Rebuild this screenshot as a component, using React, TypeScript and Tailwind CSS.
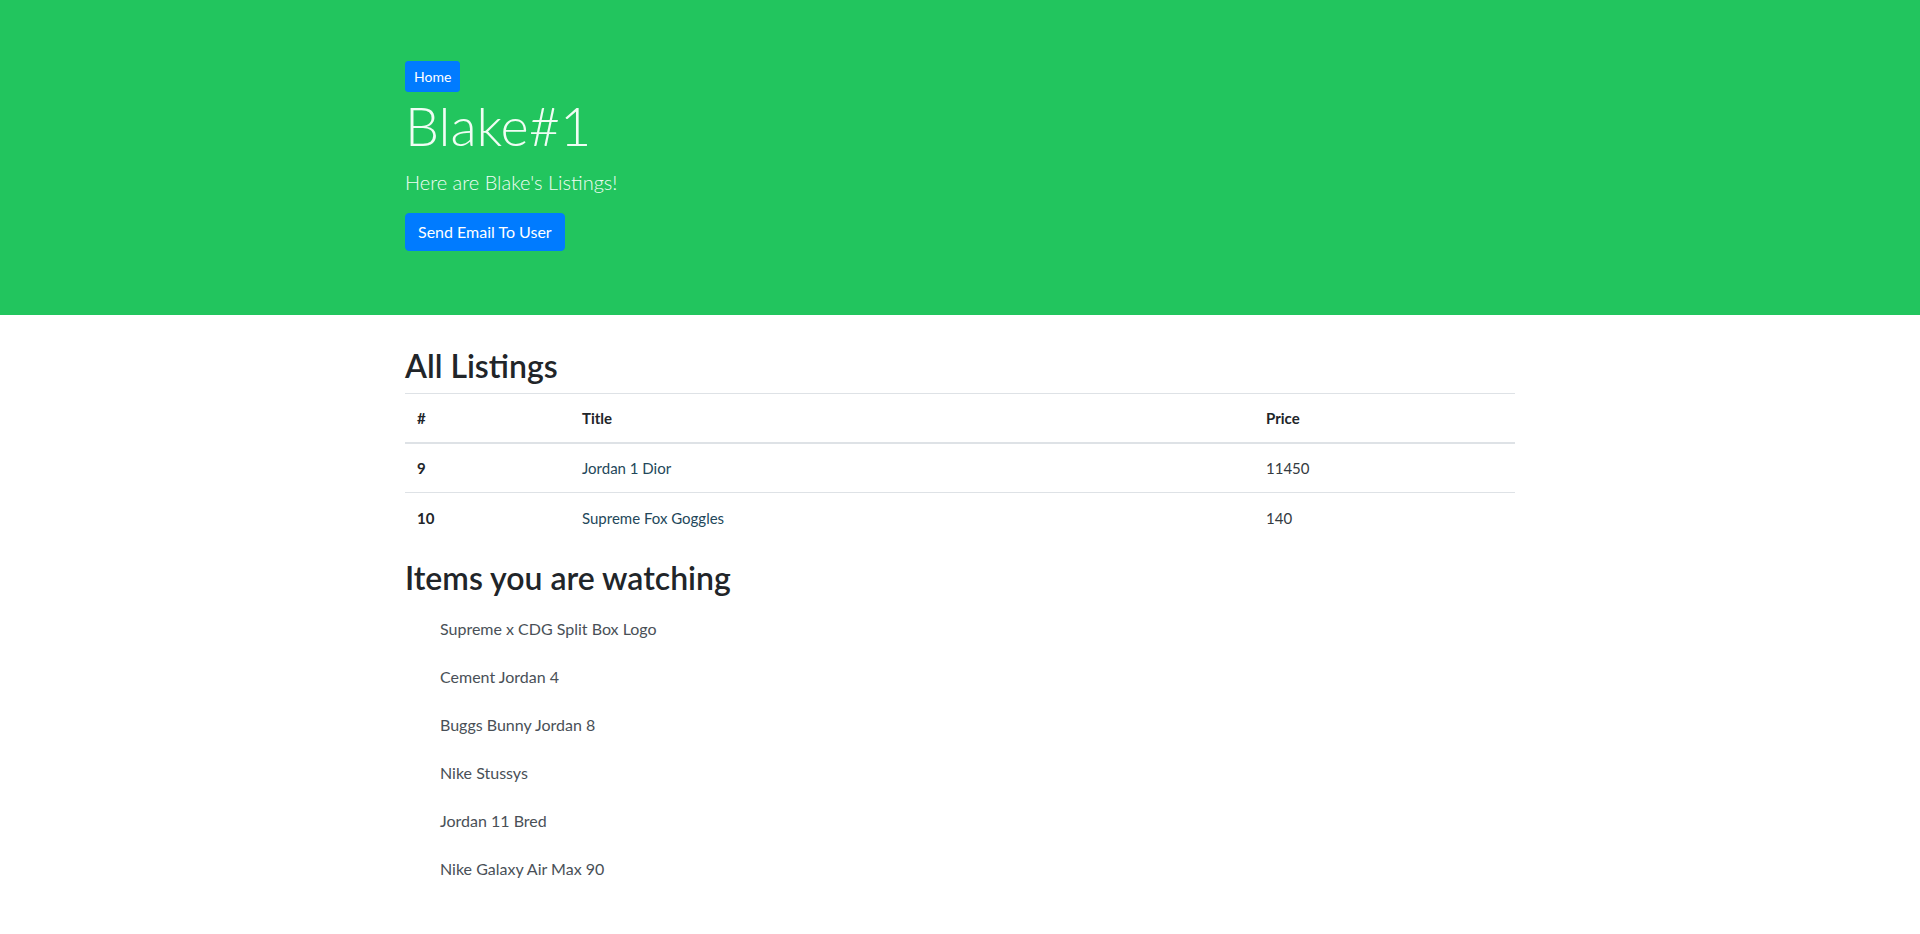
const LISTINGS = [
  { id: 9, title: "Jordan 1 Dior", price: 11450 },
  { id: 10, title: "Supreme Fox Goggles", price: 140 },
];

const WATCHING = [
  "Supreme x CDG Split Box Logo",
  "Cement Jordan 4",
  "Buggs Bunny Jordan 8",
  "Nike Stussys",
  "Jordan 11 Bred",
  "Nike Galaxy Air Max 90",
];

const font = "font-['Lato','Noto_Sans',sans-serif]";

export default function App() {
  return (
    <div className={`min-h-[934px] bg-white text-[#212529] ${font}`}>
      <header className="bg-[#22c55e] h-[315px]">
        <div className="w-[1140px] mx-auto px-[15px] pt-[61px]">
          <button
            type="button"
            className="block bg-[#007bff] border border-[#007bff] text-white text-[14px] leading-[1.5] px-2 py-1 rounded-[3px]">
            Home
          </button>
          <h1 className="text-[54px] font-light leading-[67px] text-[#f0fdf4] mb-[8px]">
            Blake#1
          </h1>
          <p className="text-[20px] font-light leading-[1.5] text-[#f0fdf4] mb-[16px] mt-[5px]">
            Here are Blake's Listings!
          </p>
          <button
            type="button"
            className="block bg-[#007bff] border border-[#007bff] text-white text-[16px] leading-[1.5] px-3 py-[6px] rounded-[4px]">
            Send Email To User
          </button>
        </div>
      </header>

      <main className="w-[1140px] mx-auto px-[15px] pt-[32px]">
        <h2 className="text-[32px] font-semibold leading-[1.2] mb-[8px]">All Listings</h2>
        <table className="w-full text-[16px] border-collapse mb-[16px]">
          <thead>
            <tr>
              <th className="w-[165px] text-left font-bold p-3 border-t border-[#dee2e6] border-b-2 leading-[1.5] text-[15px] h-[49px]">
                #
              </th>
              <th className="w-[684px] text-left font-bold p-3 border-t border-[#dee2e6] border-b-2 leading-[1.5] text-[15px] h-[49px]">
                Title
              </th>
              <th className="text-left font-bold p-3 border-t border-[#dee2e6] border-b-2 leading-[1.5] text-[15px] h-[49px]">
                Price
              </th>
            </tr>
          </thead>
          <tbody>
            {LISTINGS.map((item) => (
              <tr key={item.id}>
                <th className="text-left font-bold p-3 border-t border-[#dee2e6] leading-[1.5] text-[15px] h-[50px]">
                  {item.id}
                </th>
                <td className="p-3 border-t border-[#dee2e6] leading-[1.5] text-[15px] text-[#23475a] h-[50px]">
                  {item.title}
                </td>
                <td className="p-3 border-t border-[#dee2e6] leading-[1.5] text-[15px] text-[#343a40] h-[50px]">
                  {item.price}
                </td>
              </tr>
            ))}
          </tbody>
        </table>

        <h2 className="text-[32px] font-semibold leading-[1.2] mb-[8px]">Items you are watching</h2>
        <ul className="pl-[35px] mt-[4px]">
          {WATCHING.map((name) => (
            <li key={name} className="py-3 text-[16px] leading-[1.5] text-[#495057]">
              {name}
            </li>
          ))}
        </ul>
      </main>
    </div>
  );
}
